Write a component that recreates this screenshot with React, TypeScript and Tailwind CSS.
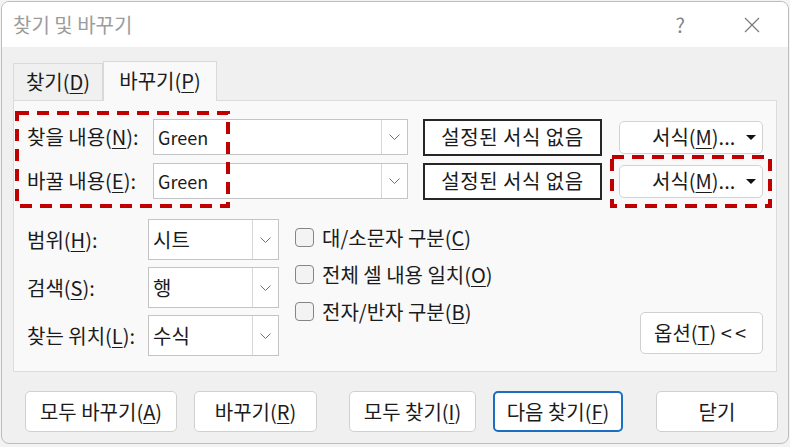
import React from "react";

const U = ({ children }: { children: React.ReactNode }) => (
  <span className="underline underline-offset-[3px] decoration-1">{children}</span>
);

function Chevron() {
  return (
    <svg width="11" height="6" viewBox="0 0 11 6" fill="none">
      <path d="M0.5 0.5 L5.5 5.5 L10.5 0.5" stroke="#707070" strokeWidth="1" />
    </svg>
  );
}

function Combo({ value, className, latin }: { value: string; className: string; latin?: boolean }) {
  return (
    <div className={`flex bg-white border border-[#c4c4c4] ${className}`}>
      <div className={`flex-1 flex items-center ${latin ? "pl-[4px] text-[18px]" : "pl-[4px]"}`}>{value}</div>
      <div className="w-[26px] flex items-center justify-center border-l border-[#d6d6d6]">
        <Chevron />
      </div>
    </div>
  );
}

function FormatButton() {
  return (
    <button className="w-[144px] h-[33px] flex items-center bg-white border border-[#d3d3d3] rounded-[5px] pl-[32px] pr-[6px]">
      <span>
        서식(<U>M</U>)...
      </span>
      <svg className="ml-auto" width="10" height="5" viewBox="0 0 10 5">
        <path d="M0 0H10L5 5Z" fill="#111" />
      </svg>
    </button>
  );
}

function Check({ children }: { children: React.ReactNode }) {
  return (
    <div className="h-[37px] flex items-center gap-[8px]">
      <div className="w-[19px] h-[19px] rounded-[4px] border border-[#858585] bg-[#f3f3f3]" />
      <span>{children}</span>
    </div>
  );
}

function DashBox({ className, w, h }: { className: string; w: number; h: number }) {
  return (
    <div className={`absolute pointer-events-none ${className}`}>
      <svg width={w} height={h}>
        <rect x="2" y="2" width={w - 4} height={h - 4} fill="none" stroke="#c00000" strokeWidth="4" strokeDasharray="12 8" />
      </svg>
    </div>
  );
}

const btn = "h-[41px] bg-white border border-[#d0d0d0] rounded-[5px] flex items-center justify-center";
const noFormat = "ml-[15px] w-[179px] h-[37px] bg-white border-2 border-[#262626] flex items-center justify-center tracking-[0.5px]";

export default function App() {
  return (
    <div className="relative w-[790px] h-[447px] bg-[#f3f3f3] pl-[1px] pt-[1px] text-[20px] leading-none text-[#1b1b1b] font-['Noto_Sans_CJK_KR',sans-serif]">
      <div className="w-[788px] h-[443px] border border-[#bdbdbd] rounded-[8px] overflow-hidden bg-[#f0f0f0] flex flex-col">
        {/* title bar */}
        <div className="h-[45px] bg-white flex items-center pl-[11px]">
          <span className="text-[#9c9c9c]">찾기 및 바꾸기</span>
          <span className="ml-auto text-[#858585]">?</span>
          <svg className="ml-[59px] mr-[28px]" width="16" height="16" viewBox="0 0 16 16">
            <path d="M1 1L15 15M15 1L1 15" stroke="#7a7a7a" strokeWidth="1.2" />
          </svg>
        </div>

        <div className="flex-1 pl-[11px] pt-[14px]">
          {/* tabs */}
          <div className="h-[39px] flex items-end">
            <div className="w-[90px] h-[37px] border border-b-0 border-[#d9d9d9] bg-[#f0f0f0] flex items-center justify-center">
              <span>
                찾기(<U>D</U>)
              </span>
            </div>
            <div className="relative z-10 -mb-px w-[114px] h-[40px] border border-b-0 border-[#d9d9d9] bg-[#f9f9f9] flex items-center justify-center pb-[1px]">
              <span>
                바꾸기(<U>P</U>)
              </span>
            </div>
          </div>

          {/* panel */}
          <div className="w-[764px] h-[272px] border border-[#dcdcdc] bg-[#f9f9f9] pt-[18px] pl-[13px] pr-[13px] pb-[15px] flex flex-col">
            <div className="h-[36px] flex items-center">
              <span className="w-[126px] shrink-0">
                찾을 내용(<U>N</U>):
              </span>
              <Combo value="Green" latin className="w-[255px] h-[36px] shrink-0" />
              <div className={noFormat}>설정된 서식 없음</div>
              <div className="ml-[17px]">
                <FormatButton />
              </div>
            </div>
            <div className="mt-[8px] h-[36px] flex items-center">
              <span className="w-[126px] shrink-0">
                바꿀 내용(<U>E</U>):
              </span>
              <Combo value="Green" latin className="w-[255px] h-[36px] shrink-0" />
              <div className={noFormat}>설정된 서식 없음</div>
              <div className="ml-[17px]">
                <FormatButton />
              </div>
            </div>

            <div className="mt-[20px] flex">
              <div className="flex flex-col gap-[7px]">
                <div className="h-[41px] flex items-center">
                  <span className="w-[121px]">
                    범위(<U>H</U>):
                  </span>
                  <Combo value="시트" className="w-[131px] h-[41px]" />
                </div>
                <div className="h-[41px] flex items-center">
                  <span className="w-[121px]">
                    검색(<U>S</U>):
                  </span>
                  <Combo value="행" className="w-[131px] h-[41px]" />
                </div>
                <div className="h-[41px] flex items-center">
                  <span className="w-[121px]">
                    찾는 위치(<U>L</U>):
                  </span>
                  <Combo value="수식" className="w-[131px] h-[41px]" />
                </div>
              </div>
              <div className="ml-[16px] flex flex-col">
                <Check>
                  대/소문자 구분(<U>C</U>)
                </Check>
                <Check>
                  전체 셀 내용 일치(<U>O</U>)
                </Check>
                <Check>
                  전자/반자 구분(<U>B</U>)
                </Check>
              </div>
              <button className="ml-auto self-end mb-[2px] w-[123px] h-[42px] bg-white border border-[#d0d0d0] rounded-[5px] flex items-center justify-center">
                옵션(<U>T</U>)&nbsp;<span className="tracking-[3px]">&lt;&lt;</span>
              </button>
            </div>
          </div>

          {/* bottom buttons */}
          <div className="mt-[19px] flex pl-[12px]">
            <button className={`${btn} w-[152px]`}>
              모두 바꾸기(<U>A</U>)
            </button>
            <button className={`${btn} w-[123px] ml-[17px]`}>
              바꾸기(<U>R</U>)
            </button>
            <button className={`${btn} w-[127px] ml-[32px]`}>
              모두 찾기(<U>I</U>)
            </button>
            <button className="h-[41px] w-[130px] ml-[17px] bg-white border-2 border-[#1a6fc2] rounded-[5px] flex items-center justify-center">
              다음 찾기(<U>F</U>)
            </button>
            <button className={`${btn} w-[122px] ml-[33px]`}>닫기</button>
          </div>
        </div>
      </div>

      <DashBox className="left-[15px] top-[111px]" w={215} h={97} />
      <DashBox className="left-[610px] top-[155px]" w={162} h={53} />
    </div>
  );
}
